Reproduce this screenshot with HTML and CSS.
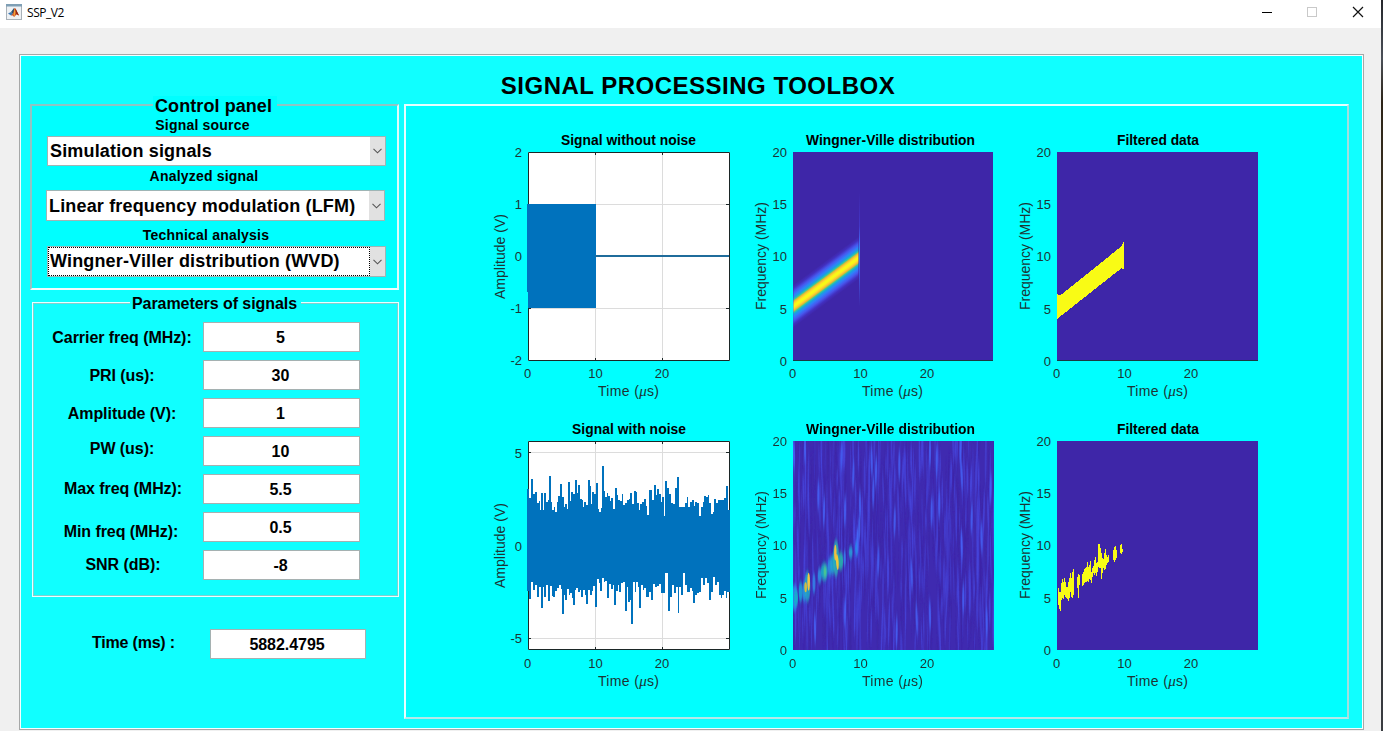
FILE: index.html
```html
<!DOCTYPE html>
<html lang="en">
<head>
<meta charset="utf-8">
<title>SSP_V2</title>
<link rel="stylesheet" href="styles.css">
</head>
<body>
<div class="window">
<header class="titlebar">
  <svg class="app-icon" width="16" height="16" viewBox="0 0 16 16">
    <rect x=".5" y=".5" width="15" height="15" fill="#eef1f4" stroke="#a9b1b8"/>
    <rect x="0" y="0" width="16" height="2.500" fill="#7f9fb5"/>
    <path d="M2 9.500l3-1.500 2 2-2 1.500z" fill="#3b78b4"/>
    <path d="M5 8l3-4 1 3-2 3z" fill="#27506f"/>
    <path d="M5 11.500l2-2 1.500-5.500 1 .5 3.500 7-2.500-1-2.500 2.500-1-1.500z" fill="#c9491d"/>
    <path d="M8.500 4.500l1 3.500-1 5-1-2.500z" fill="#f0a23a"/>
    <path d="M9.500 4.500l3.500 7-3-2z" fill="#8b2517"/>
  </svg>
  <span class="app-name">SSP_V2</span>
  <svg class="window-buttons" width="106" height="16" viewBox="1259 4 106 16" fill="none">
    <path d="M1262 12.5h10" stroke="#000"/>
    <rect x="1307.500" y="7.500" width="9" height="9" stroke="#c9c9c9"/>
    <path d="M1353 7l10 10M1363 7l-10 10" stroke="#111" stroke-width="1.2"/>
  </svg>
</header>
<main class="panel">
  <h1 class="heading">SIGNAL PROCESSING TOOLBOX</h1>
  <div class="columns">
    <section class="sidebar">
      <fieldset class="control">
        <legend>Control panel</legend>
        <div class="caption caption-source">Signal source</div>
        <div class="select"><span>Simulation signals</span><i><svg width="9" height="6" viewBox="0 0 9 6"><path d="M.5 .8l4 4 4-4"/></svg></i></div>
        <div class="caption caption-signal">Analyzed signal</div>
        <div class="select select-signal"><span>Linear frequency modulation (LFM)</span><i><svg width="9" height="6" viewBox="0 0 9 6"><path d="M.5 .8l4 4 4-4"/></svg></i></div>
        <div class="caption caption-analysis">Technical analysis</div>
        <div class="select select-focus"><span>Wingner-Viller distribution (WVD)</span><i><svg width="9" height="6" viewBox="0 0 9 6"><path d="M.5 .8l4 4 4-4"/></svg></i></div>
      </fieldset>
      <fieldset class="params">
        <legend>Parameters of signals</legend>
        <div class="row"><label>Carrier freq (MHz):</label><div class="field">5</div></div>
        <div class="row"><label>PRI (us):</label><div class="field">30</div></div>
        <div class="row"><label>Amplitude (V):</label><div class="field">1</div></div>
        <div class="row"><label class="raised">PW (us):</label><div class="field">10</div></div>
        <div class="row"><label class="level">Max freq (MHz):</label><div class="field">5.5</div></div>
        <div class="row"><label class="lowered">Min freq (MHz):</label><div class="field">0.5</div></div>
        <div class="row"><label class="level">SNR (dB):</label><div class="field">-8</div></div>
      </fieldset>
      <div class="elapsed"><label>Time (ms) :</label><div class="field">5882.4795</div></div>
    </section>
    <section class="plots">
      <svg class="plot" viewBox="485 128 265 290" data-x="528" data-y="152" data-kind="clean"></svg>
      <svg class="plot" viewBox="750 128 265 290" data-x="793" data-y="152" data-kind="wvd"></svg>
      <svg class="plot" viewBox="1015 128 265 290" data-x="1057" data-y="152" data-kind="mask"></svg>
      <svg class="plot" viewBox="485 418 265 290" data-x="528" data-y="441" data-kind="noisy"></svg>
      <svg class="plot" viewBox="750 418 265 290" data-x="793" data-y="441" data-kind="wvdNoisy"></svg>
      <svg class="plot" viewBox="1015 418 265 290" data-x="1057" data-y="441" data-kind="maskNoisy"></svg>
    </section>
  </div>
</main>
<div class="desktop-edge"></div>
</div>
<script src="plots.js"></script>
</body>
</html>
```

FILE: styles.css
```css
* { box-sizing: border-box; }
body { margin: 0; background: #f0f0f0; font-family: "Liberation Sans", Arial, sans-serif; color: #000; overflow: hidden; }
.window { position: relative; height: 731px; }
.titlebar { display: flex; align-items: center; height: 28px; padding: 0 18px 4px 6px; background: #fff; }
.app-name { flex: 1; margin-left: 5px; font: 12px "Open Sans", sans-serif; letter-spacing: -0.45px; }
.desktop-edge { position: absolute; right: 0; top: 0; width: 2px; height: 731px; background: linear-gradient(#24262b, #4b5058 8%, #2c2418 14%, #463b28 40%, #222 60%, #3a3d42); }

.panel { width: 1345px; height: 676px; margin: 26px 0 0 19px; border: 1px solid #a6a8a8; background: #10ffff; box-shadow: inset 0 0 0 1px #f4ffff; padding: 1px; }
.heading { margin: 0; height: 48px; padding: 11px 0 0 13px; font-size: 24px; letter-spacing: .5px; line-height: 38px; font-weight: bold; text-align: center; }
.columns { display: flex; align-items: flex-start; }
.sidebar { width: 383px; margin-top: -8px; font-weight: bold; }

fieldset { min-width: 0; margin: 0; padding: 0; }
.control { width: 369px; height: 194px; margin-left: 9px; border: 2px solid #8fc4c4; border-right-color: #dffafa; border-bottom-color: #effdfd; background: #00ffff; }
legend { background: #00ffff; }
.control legend { height: 18px; margin-left: 121px; padding: 2px 5px 0 2px; font-size: 18px; line-height: 16px; letter-spacing: .08px; }
.caption { font-size: 14px; letter-spacing: .2px; text-align: center; padding-right: 24px; }
.caption-source { height: 22px; line-height: 22px; }
.caption-signal { height: 24px; line-height: 20px; padding-right: 21px; }
.caption-analysis { height: 26px; line-height: 22px; padding-top: 4px; padding-right: 17px; }
.select { display: flex; width: 339px; height: 30px; margin-left: 15px; border: 1px solid #9fb5b5; background: #fff; font-size: 18px; line-height: 29px; letter-spacing: .16px; white-space: nowrap; }
.select span { flex: 1; padding-left: 2px; }
.select i { width: 15px; display: flex; align-items: center; justify-content: center; background: #e1e1e1; }
.select path { fill: none; stroke: #555; stroke-width: 1.1; }
.select-signal { height: 31px; margin-left: 14px; margin-bottom: -1px; line-height: 30px; }
.select-focus { height: 31px; }
.select-focus span { outline: 1px dotted #000; outline-offset: -1px; }

.params { width: 367px; height: 303px; margin: 4px 0 0 11px; border: 1px solid #e9ffff; box-shadow: inset 0 0 0 1px #82cfcf; background: #10ffff; }
.params legend { height: 17px; margin-left: 97px; padding: 2px 4px 0 2px; font-size: 16px; line-height: 16px; letter-spacing: -.06px; background: #10ffff; }
.row { display: flex; align-items: center; height: 38px; padding-left: 9px; font-size: 16px; }
.params legend + .row { margin-top: 7px; }
.row label { width: 161px; margin-top: 2px; padding-right: 1px; letter-spacing: -.06px; text-align: center; white-space: nowrap; }
.row .raised { margin-top: 0; margin-bottom: 4px; }
.row .level { margin-top: 0; padding: 0 0 0 1px; }
.row .lowered { margin-top: 9px; padding-right: 3px; }
.field { width: 157px; height: 30px; border: 1px solid #a5b1b1; padding-right: 2px; background: #fff; font-size: 16px; line-height: 29px; text-align: center; }
.elapsed { display: flex; padding: 32px 0 0 71px; font-size: 16px; line-height: 28px; }
.elapsed label { width: 118px; letter-spacing: -.2px; }
.elapsed .field { width: 156px; letter-spacing: -.05px; }

.plots { display: grid; grid-template-columns: repeat(3, 265px); grid-auto-rows: 290px; width: 945px; height: 615px; padding: 22px 0 0 79px; background: #00ffff; border: 2px solid #e6ffff; border-right-color: #a5dede; border-bottom-color: #b5e9e9; }
.plot { display: block; width: 265px; height: 290px; font: 13px "Liberation Sans", Arial, sans-serif; fill: #1d3434; }
.plot .title { font-weight: bold; font-size: 13.8px; fill: #000; }
.plot .axis { font-size: 14px; }
.plot .mu { font-family: "Liberation Serif", serif; font-style: italic; font-size: 15px; }
```

FILE: plots.js
```js
const NS = 'http://www.w3.org/2000/svg';
const BACK = '#3e26a8';

function add(parent, name, attrs, text) {
  const el = document.createElementNS(NS, name);
  for (const key in attrs) el.setAttribute(key, attrs[key]);
  if (text !== undefined) el.textContent = text;
  parent.appendChild(el);
  return el;
}

// Small repeatable generator for the background of the noisy distribution
let seed = 71;
function rnd() {
  seed = (seed * 16807) % 2147483647;
  return seed / 2147483647;
}

// Envelope samples: position and level, in thirds of a pixel
const upper = '130:222,135:250,140:192,145:238,153:232,158:265,163:258,167:285,171:234,175:285,180:234,185:262,190:255,194:183,199:262,203:285,208:275,212:290,217:262,222:243,228:207,233:245,238:275,242:268,247:283,251:201,256:258,262:231,267:238,273:195,278:235,282:210,287:252,292:255,296:275,300:260,305:270,311:195,316:212,320:268,324:232,329:236,335:204,341:282,345:292,349:278,354:153,359:228,363:247,367:235,372:243,376:257,381:250,386:282,392:219,397:240,402:255,407:257,412:237,418:270,422:265,428:256,433:252,439:233,444:268,449:228,454:230,459:264,463:285,468:268,474:262,479:252,484:272,488:300,494:225,499:226,503:255,510:210,515:240,519:222,524:238,529:262,534:247,539:303,543:198,549:220,553:237,560:265,566:267,572:218,578:187,583:275,590:275,597:275,602:265,607:245,612:275,618:262,623:254,628:272,633:262,638:265,645:303,650:275,655:262,660:242,665:245,670:240,675:265,680:297,685:290,690:253,695:265,700:255,707:255,714:255,720:250,725:213,731:285';
const lower = '130:527,135:553,142:500,148:525,153:510,158:545,163:515,171:578,176:515,180:545,185:510,192:557,197:513,202:542,207:547,213:528,219:518,225:510,229:522,234:597,239:540,243:555,248:522,253:540,258:535,262:550,266:570,271:525,277:520,282:530,287:525,291:545,296:525,301:540,307:567,312:525,317:540,322:528,327:512,333:577,338:492,344:505,348:528,354:490,358:500,363:497,369:550,374:508,380:522,385:510,390:570,396:527,401:510,405:530,411:505,416:500,422:587,427:515,432:560,436:555,441:627,446:500,451:530,457:500,461:517,465:580,470:510,475:525,480:520,488:545,494:530,501:555,507:507,513:515,519:512,524:507,530:535,537:535,544:475,552:587,559:545,565:510,570:535,575:515,580:593,585:515,591:540,596:475,602:510,610:530,617:520,622:528,627:565,632:540,638:535,643:530,650:488,656:510,663:490,670:505,675:555,681:530,688:487,693:510,698:500,704:540,709:550,715:540,719:528,724:550,730:530';
const detected = '130:520:570,133:532:582,136:532:587,139:505:555,142:492:550,145:500:552,148:490:540,151:500:545,154:515:550,157:515:552,160:500:557,163:490:550,166:473:530,169:488:545,172:470:550,175:462:540,187:485:520,190:478:550,193:480:510,203:478:512,206:470:510,209:463:505,212:460:500,215:455:500,218:440:498,221:455:500,224:450:492,227:438:495,230:470:505,233:460:485,236:452:475,239:435:480,242:425:475,245:445:482,248:440:470,251:388:455,254:387:458,257:398:460,260:415:493,263:430:475,266:432:460,269:415:465,272:403:462,275:420:450,278:425:445,281:420:440,296:405:435,299:395:440,302:393:435,305:405:428,317:390:415,320:388:418,323:402:412';
const parse = list => list.split(',').map(item => item.split(':').map(Number));

function steps(list) {
  const pts = parse(list);
  let d = 'M528 545';
  pts.forEach(([x, y], i) => {
    const left = i ? (pts[i - 1][0] + x) / 2 : 127;
    const right = i < pts.length - 1 ? (x + pts[i + 1][0]) / 2 : 735;
    const level = 415 + y / 3;
    d += `L${485 + left / 3} ${level}L${485 + right / 3} ${level}`;
  });
  return `${d}L730 545Z`;
}

function lineAxes(svg, x, y, rows) {
  add(svg, 'rect', { x: x, y: y, width: 202, height: 209, fill: '#fff' });
  const grid = rows.map(r => `M${x} ${r + .5}h201`).join('') + `M${x + 67.5} ${y}v208M${x + 134.5} ${y}v208`;
  add(svg, 'path', { d: grid, stroke: '#dcdcdc' });
}

function frame(svg, x, y, rows) {
  const ticks = rows.map(r => `M${x} ${r + .5}h3M${x + 201} ${r + .5}h-3`).join('');
  add(svg, 'path', {
    d: `M${x + .5} ${y + .5}h201v208h-201zM${x + 67.5} ${y}v3m0 203v3M${x + 134.5} ${y}v3m0 203v3${ticks}`,
    stroke: '#1b2727', fill: 'none'
  });
}

function gradient(svg, id, stops) {
  const g = add(svg, 'linearGradient', { id: id, x1: 0, y1: 0, x2: 0, y2: 1 });
  stops.forEach(([at, color]) => add(g, 'stop', { offset: at, 'stop-color': color }));
}

function streak(svg, cx, cy, rx, ry, color, opacity, tilt) {
  add(svg, 'ellipse', { cx: cx, cy: cy, rx: rx, ry: ry, fill: color, opacity: opacity, transform: `rotate(${tilt} ${cx} ${cy})` });
}

const draw = {
  clean(svg, x, y) {
    lineAxes(svg, x, y, [204, 256, 308]);
    frame(svg, x, y, [204, 256, 308]);
    add(svg, 'rect', { x: 528, y: 204, width: 68, height: 104, fill: '#0072bd' });
    add(svg, 'rect', { x: 527, y: 204, width: 1, height: 88, fill: '#0072bd' });
    add(svg, 'rect', { x: 595, y: 255, width: 134, height: 2, fill: '#1f6c9b' });
  },
  noisy(svg, x, y) {
    lineAxes(svg, x, y, [452, 638]);
    frame(svg, x, y, [452, 638]);
    add(svg, 'path', { d: steps(upper), fill: '#0072bd', 'shape-rendering': 'crispEdges' });
    add(svg, 'path', { d: steps(lower), fill: '#0072bd', 'shape-rendering': 'crispEdges' });
    add(svg, 'rect', { x: 527, y: 496, width: 2, height: 94, fill: '#0072bd' });
  },
  wvd(svg, x, y) {
    add(svg, 'rect', { x: x, y: y, width: 200, height: 208, fill: BACK });
    gradient(svg, 'ridge', [[0, BACK], [.08, '#422fbf'], [.17, '#4757ee'], [.25, '#2f80fa'], [.31, '#17a4dd'], [.355, '#3cc994'],
      [.385, '#d5bb35'], [.42, '#fcc636'], [.46, '#f9ef1c'], [.5, '#f9fb15'], [.54, '#f9ef1c'], [.58, '#fcc636'], [.615, '#d5bb35'], [.645, '#3cc994'],
      [.69, '#17a4dd'], [.75, '#2f80fa'], [.83, '#4757ee'], [.92, '#422fbf'], [1, BACK]]);
    add(svg, 'path', { d: 'M793 285h65.500v43H793z', fill: 'url(#ridge)', transform: 'matrix(1 -.742 0 1 0 588.400)' });
    gradient(svg, 'burst', [[0, BACK], [.3, '#4335c7'], [.45, '#4270f5'], [.52, '#2a92ee'], [.65, '#4262ef'], [1, BACK]]);
    add(svg, 'rect', { x: 859, y: 192, width: 1, height: 114, fill: 'url(#burst)' });
    add(svg, 'rect', { x: x, y: 280, width: 1, height: 52, fill: 'url(#burst)', opacity: .5 });
    add(svg, 'path', { d: `M${x} 360.500h200`, stroke: '#1b3940' });
  },
  mask(svg, x, y) {
    add(svg, 'rect', { x: x, y: y, width: 201, height: 208, fill: BACK });
    add(svg, 'path', {
      d: 'M1057 293.300V319L1121.700 268l2.300 1.700V242.300h-.7l-2.300 4.400L1060.700 295h-2.400z',
      fill: '#f9fb15', 'shape-rendering': 'crispEdges'
    });
    add(svg, 'path', { d: `M${x} 360.500h201`, stroke: '#1b3940' });
  },
  wvdNoisy(svg, x, y) {
    add(svg, 'rect', { x: x, y: y, width: 201, height: 209, fill: '#3f2ab0' });
    const defs = add(svg, 'defs', {});
    const clip = add(defs, 'clipPath', { id: 'field' });
    add(clip, 'rect', { x: x, y: y, width: 201, height: 209 });
    const soft = add(defs, 'filter', { id: 'soft', x: '-5%', y: '-5%', width: '110%', height: '110%' });
    add(soft, 'feGaussianBlur', { stdDeviation: '.25 4' });
    const outer = add(svg, 'g', { 'clip-path': 'url(#field)' });
    const g = add(outer, 'g', { filter: 'url(#soft)' });
    for (let i = 0; i < 720; i++) {
      const color = rnd() < .6 ? '#4747de' : '#3d25a6';
      streak(g, x + rnd() * 201, y + rnd() * 209, .45 + rnd() * .55, 8 + rnd() * 24, color, .35 + rnd() * .45, rnd() * 4 - 2);
    }
    parse('275:120,365:140,378:170,448:150,560:140,635:180,205:240,285:290,434:320,545:290,568:270,665:310,695:370,635:390,385:440,485:480,500:610,540:600,440:650,285:590,195:640,330:270,310:180,165:100,710:620,640:550,132:120,632:100,540:110,222:290,370:230,722:220')
      .forEach(([px, py]) => streak(g, 750 + px / 3, 415 + py / 3, 1.1, 15, '#4665fa', .8, rnd() * 4 - 2));
    const glow = add(outer, 'g', {});
    const blur = add(defs, 'filter', { id: 'glow', x: '-20%', y: '-20%', width: '140%', height: '140%' });
    add(blur, 'feGaussianBlur', { stdDeviation: '.7 2.500' });
    glow.setAttribute('filter', 'url(#glow)');
    [[134, 548, 3, 13, '#2c91ee'], [138, 550, 2, 8, '#13b4c9'], [152, 530, 2, 10, '#18a7d9'], [163, 530, 2, 10, '#269adf'],
      [172, 515, 3, 15, '#22acc8'], [192, 505, 1.500, 10, '#3186e9'], [209, 482, 2, 8, '#2e93e5'], [223, 470, 3.500, 9, '#17b5c5'],
      [225, 470, 1.500, 5, '#53cc86'], [240, 455, 2.500, 9, '#2b93e0'], [248, 448, 2.500, 10, '#1fa8cf'], [258, 430, 3, 18, '#2cb3b7'],
      [272, 438, 2.500, 9, '#26bba9'], [284, 430, 1.200, 8, '#3783ef'], [302, 412, 2, 6, '#25a5db'], [320, 400, 1.600, 8, '#278fee'],
      [323, 375, 1, 12, '#456bfa'], [328, 340, 1, 12, '#4667ee']]
      .forEach(([px, py, rx, ry, c]) => streak(glow, 750 + px / 3, 415 + py / 3, rx, ry, c, .85, 0));
    [[176, 500, 1.300, 9, '#ffc83b'], [167, 517, 1.300, 5, '#dcbd3c'], [256, 413, 1.200, 8, '#ffc13a'], [262, 441, 1.300, 8, '#fbc934']]
      .forEach(([px, py, rx, ry, c]) => streak(outer, 750 + px / 3, 415 + py / 3, rx, ry, c, .95, px === 262 ? -4 : 0));
  },
  maskNoisy(svg, x, y) {
    add(svg, 'rect', { x: x, y: y, width: 201, height: 209, fill: BACK });
    const d = parse(detected).map(([px, top, bottom]) => `M${Math.floor(1015 + px / 3)} ${415 + top / 3}h1v${(bottom - top) / 3}h-1z`).join('');
    add(svg, 'path', { d: d, fill: '#f9fb15', 'shape-rendering': 'crispEdges' });
  }
};

const titles = {
  clean: ['Signal without noise', 561, 135], noisy: ['Signal with noise', 572, 114],
  wvd: ['Wingner-Ville distribution', 806, 169], wvdNoisy: ['Wingner-Ville distribution', 806, 169],
  mask: ['Filtered data', 1117, 82], maskNoisy: ['Filtered data', 1117, 82]
};
const levels = {
  clean: [['2', 0], ['1', 52], ['0', 104], ['-1', 156], ['-2', 208]],
  noisy: [['5', 12], ['0', 104.500], ['-5', 197]]
};
const frequency = [['20', 0], ['15', 52], ['10', 104], ['5', 156.500], ['0', 208.500]];

document.querySelectorAll('.plot').forEach(svg => {
  const kind = svg.dataset.kind, x = +svg.dataset.x, y = +svg.dataset.y;
  draw[kind](svg, x, y);
  const [title, tx, width] = titles[kind];
  add(svg, 'text', { class: 'title', x: tx, y: y - 7, textLength: width }, title);
  (levels[kind] || frequency).forEach(([label, dy]) =>
    add(svg, 'text', { x: x - 6, y: y + dy + 5, 'text-anchor': 'end' }, label));
  [['0', -.5], ['10', 67.500], ['20', 134]].forEach(([label, dx]) =>
    add(svg, 'text', { x: x + dx, y: y + (y > 300 ? 227 : 226), 'text-anchor': 'middle' }, label));
  const base = y + (y > 300 ? 245 : 244), left = x === 1057 ? 1127 : x === 793 ? 862 : 598;
  const time = add(svg, 'text', { class: 'axis', x: left, y: base, textLength: 61 });
  add(time, 'tspan', {}, 'Time (');
  add(time, 'tspan', { class: 'mu' }, 'μ');
  add(time, 'tspan', {}, 's)');
  const amp = levels[kind], ax = amp ? 505 : x === 793 ? 766 : 1030, ay = y + (amp ? 147 : 158);
  add(svg, 'text', { class: 'axis', x: 0, y: 0, textLength: amp ? 85 : 108, transform: `translate(${ax} ${ay}) rotate(-90)` },
    amp ? 'Amplitude (V)' : 'Frequency (MHz)');
});
```
